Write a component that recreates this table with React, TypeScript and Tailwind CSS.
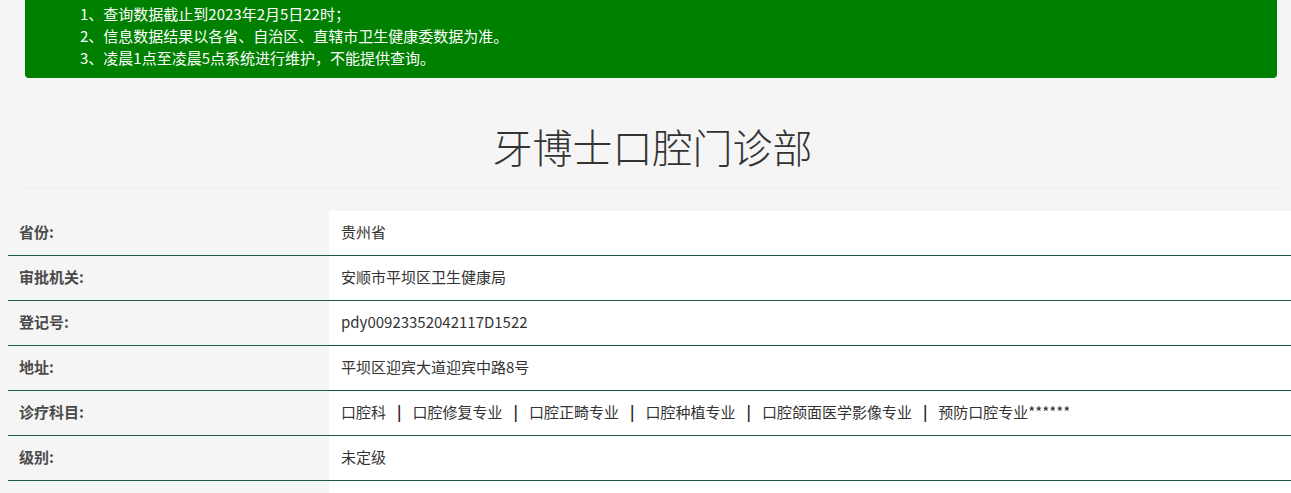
const notices = [
  "1、查询数据截止到2023年2月5日22时；",
  "2、信息数据结果以各省、自治区、直辖市卫生健康委数据为准。",
  "3、凌晨1点至凌晨5点系统进行维护，不能提供查询。",
];

const subjects = ["口腔科", "口腔修复专业", "口腔正畸专业", "口腔种植专业", "口腔颌面医学影像专业", "预防口腔专业******"];

const rows: { label: string; value: React.ReactNode }[] = [
  { label: "省份:", value: "贵州省" },
  { label: "审批机关:", value: "安顺市平坝区卫生健康局" },
  { label: "登记号:", value: "pdy00923352042117D1522" },
  { label: "地址:", value: "平坝区迎宾大道迎宾中路8号" },
  {
    label: "诊疗科目:",
    value: subjects.map((s, i) => (
      <span key={s}>
        {i > 0 && <span className="mx-[11px] font-bold text-[#222]">|</span>}
        {s}
      </span>
    )),
  },
  { label: "级别:", value: "未定级" },
];

function App() {
  return (
    <div
      className="min-h-[493px] bg-[#f5f5f5] text-[#333]"
      style={{ fontFamily: '"Noto Sans CJK SC", "Noto Sans", sans-serif' }}
    >
      <div className="mx-[25px] mr-[11px]">
        <div className="mr-[3px] rounded-b-[4px] bg-[#008000] pl-[55px] pt-[3px] pb-[9px] text-[15px] text-white">
          {notices.map((n) => (
            <p key={n} className="leading-[22px]">
              {n}
            </p>
          ))}
        </div>

        <h1 className="mt-[45px] text-center text-[40px] font-light leading-[46px] text-[#333]">
          牙博士口腔门诊部
        </h1>
        <div className="mt-[19px] border-t border-[#eeeeee]" />
      </div>

      <div className="ml-[8px] mt-[22px] text-[15px]">
        {rows.map((r) => (
          <div key={r.label} className="flex h-[45px] border-b border-[#1d5b3f]">
            <div className="flex w-[321px] items-center pl-[11px] pb-[2px] font-bold text-[#4a4a4a]">
              {r.label}
            </div>
            <div className="flex flex-1 items-center whitespace-nowrap bg-white pl-[12px] pb-[2px]">
              {r.value}
            </div>
          </div>
        ))}
        <div className="flex h-[20px]">
          <div className="w-[321px]" />
          <div className="flex-1 bg-white" />
        </div>
      </div>
    </div>
  );
}

export default App;
